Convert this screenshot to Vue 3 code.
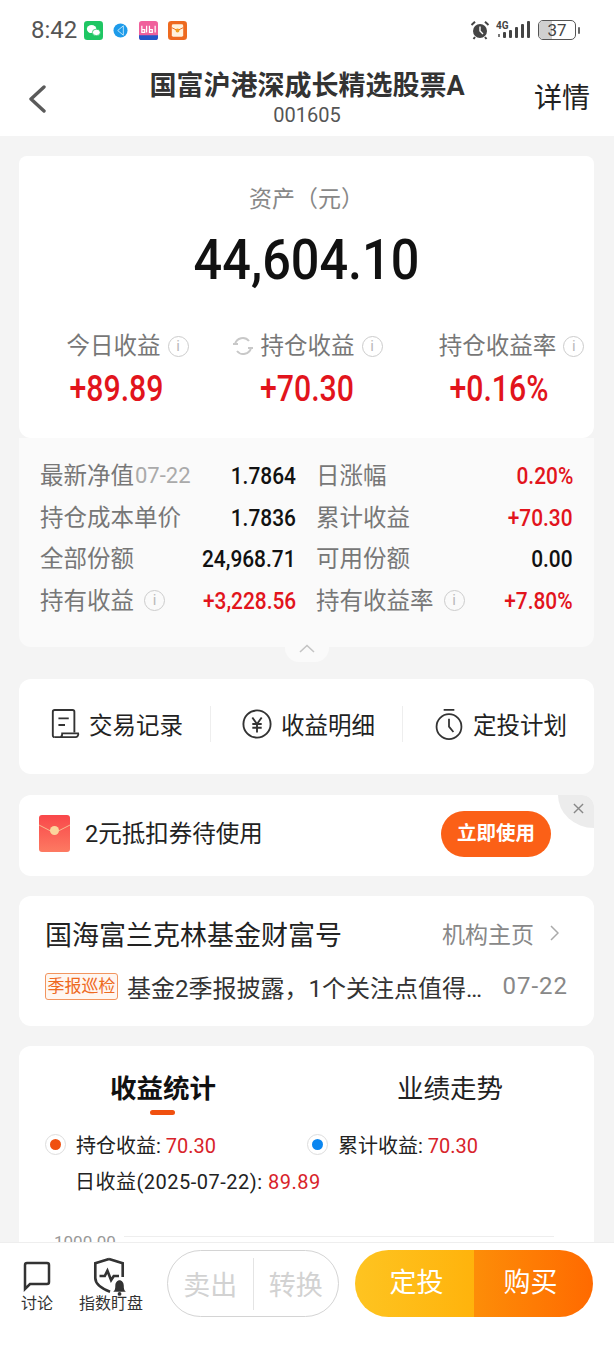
<template>
  <div class="page">
    <!-- 状态栏 -->
    <div class="status-bar">
      <span class="time">8:42</span>
      <svg class="app-icon" viewBox="0 0 20 20">
        <rect width="20" height="20" rx="3.5" fill="#1fc663" />
        <ellipse cx="8" cy="8.5" rx="5" ry="4.2" fill="#fff" />
        <ellipse cx="13" cy="12" rx="4.2" ry="3.4" fill="#fff" stroke="#1fc663" stroke-width=".8" />
      </svg>
      <svg class="app-icon small" viewBox="0 0 16 16">
        <circle cx="8" cy="8" r="7.5" fill="#1d9bea" />
        <path d="M11 3 5 8l6 5M11 3v10" stroke="#d5effc" stroke-width=".9" fill="none" />
      </svg>
      <svg class="app-icon pink" viewBox="0 0 20 20">
        <rect width="20" height="20" rx="3" fill="#f0609c" />
        <path d="M0 15h20v2a3 3 0 0 1-3 3H3a3 3 0 0 1-3-3z" fill="#2456c8" />
        <path d="M3 5v7h3V9H3M8 5v7M11 5v7h3V9h-3M17 5v7" stroke="#fff" stroke-width="1.3" fill="none" />
      </svg>
      <svg class="app-icon" viewBox="0 0 20 20">
        <rect width="20" height="20" rx="3.5" fill="#ee6a1f" />
        <rect x="4" y="3.5" width="12" height="13" rx="1.5" fill="#fff3dd" />
        <path d="M4 7l6 3 6-3" stroke="#ee6a1f" fill="none" />
        <circle cx="10" cy="10" r="2" fill="#f0a020" />
      </svg>
      <div class="status-right">
        <svg class="alarm" viewBox="0 0 20 20">
          <circle cx="10" cy="11" r="7" fill="#444" />
          <path d="M10 6.5V11l3 3" stroke="#fff" stroke-width="1.4" fill="none" />
          <path d="M1.5 5 5 1.8M18.5 5 15 1.8M5 17l-1.5 2M15 17l1.5 2" stroke="#444" stroke-width="2" />
        </svg>
        <svg class="signal" viewBox="0 0 36 20">
          <text x="0" y="9" class="net">4G</text>
          <rect x="2" y="14" width="2" height="3" fill="#777" />
          <rect x="7" y="12" width="3" height="6" rx="1" fill="#444" />
          <rect x="13" y="10" width="3" height="8" rx="1" fill="#444" />
          <rect x="19" y="7" width="3" height="11" rx="1" fill="#444" />
          <rect x="25" y="4" width="3" height="14" rx="1" fill="#444" />
          <rect x="31" y="1" width="3" height="17" rx="1" fill="#444" />
        </svg>
        <div class="battery"><span class="battery-fill"></span><span class="battery-num">37</span></div>
        <span class="battery-cap"></span>
      </div>
    </div>

    <!-- 标题栏 -->
    <header class="nav">
      <svg class="back" viewBox="0 0 18 28"><path d="M16 2 3 14l13 12" /></svg>
      <div class="nav-title">
        <div class="fund-name">国富沪港深成长精选股票A</div>
        <div class="fund-code">001605</div>
      </div>
      <span class="nav-detail">详情</span>
    </header>

    <main class="content">
      <section class="asset-card">
        <div class="asset-top">
          <div class="asset-label">资产（元）</div>
          <div class="asset-value">44,604.10</div>
          <div class="profit-row">
            <div v-for="item in profits" :key="item.label" class="profit-col">
              <div class="profit-label">
                <svg v-if="item.refresh" class="refresh" viewBox="0 0 22 22">
                  <path d="M3 9a8 8 0 0 1 14-3M19 13a8 8 0 0 1-14 3" />
                  <path d="M1 9h5M21 13h-5" />
                </svg>
                <span>{{ item.label }}</span>
                <span class="info">i</span>
              </div>
              <div class="profit-value">{{ item.value }}</div>
            </div>
          </div>
        </div>
        <div class="asset-detail">
          <div v-for="row in details" :key="row[0].label" class="detail-row">
            <div v-for="cell in row" :key="cell.label" class="detail-cell">
              <span class="detail-label">{{ cell.label }}</span>
              <span v-if="cell.date" class="detail-date">{{ cell.date }}</span>
              <span v-if="cell.info" class="info small-info">i</span>
              <span class="detail-value" :class="{ red: cell.red }">{{ cell.value }}</span>
            </div>
          </div>
          <div class="collapse">
            <svg viewBox="0 0 16 9"><path d="M1 8l7-6.5L15 8" /></svg>
          </div>
        </div>
      </section>

      <section class="card actions">
        <div class="action">
          <svg viewBox="0 0 32 34" class="action-icon">
            <path d="M5 31a2 2 0 0 1-2-2V4a2 2 0 0 1 2-2h19a2 2 0 0 1 2 2v22" />
            <path d="M9 11h11M9 18h7" />
            <path d="M5 31h22a3 3 0 0 0 3-4H13c0 2-1 4-3 4" />
          </svg>
          <span>交易记录</span>
        </div>
        <div class="action">
          <svg viewBox="0 0 32 34" class="action-icon">
            <circle cx="16" cy="17" r="14.5" />
            <path d="M11 10l5 7 5-7M11 17h10M11 21h10M16 17v9" stroke-width="1.6" />
          </svg>
          <span>收益明细</span>
        </div>
        <div class="action">
          <svg viewBox="0 0 32 36" class="action-icon">
            <circle cx="16" cy="21" r="14" />
            <path d="M10 2h12M16 12v9l5 6" />
          </svg>
          <span>定投计划</span>
        </div>
      </section>

      <section class="card coupon">
        <svg class="packet" viewBox="0 0 31 37">
          <defs>
            <linearGradient id="packetFill" x1="0" y1="0" x2="0" y2="1">
              <stop offset="0" stop-color="#f9474a" />
              <stop offset="1" stop-color="#fd7a62" />
            </linearGradient>
          </defs>
          <rect width="31" height="37" rx="3" fill="url(#packetFill)" />
          <path d="M0 10l15.500 8L31 10" stroke="#f7b98f" fill="none" />
          <circle cx="15.500" cy="15.500" r="4.500" fill="#fbd59c" />
        </svg>
        <span class="coupon-text">2元抵扣券待使用</span>
        <span class="coupon-btn">立即使用</span>
        <span class="coupon-close">
          <svg viewBox="0 0 12 12"><path d="M1 1l10 10M11 1 1 11" /></svg>
        </span>
      </section>

      <section class="card agency">
        <div class="agency-head">
          <span class="agency-name">国海富兰克林基金财富号</span>
          <span class="agency-link">机构主页</span>
          <svg class="agency-arrow" viewBox="0 0 9 16"><path d="M1 1l7 7-7 7" /></svg>
        </div>
        <div class="agency-news">
          <span class="news-tag">季报巡检</span>
          <span class="news-text">基金2季报披露，1个关注点值得…</span>
          <span class="news-date">07-22</span>
        </div>
      </section>

      <section class="card stats">
        <div class="tabs">
          <div class="tab active">收益统计</div>
          <div class="tab">业绩走势</div>
        </div>
        <div class="legend">
          <div class="legend-item">
            <span class="radio"><i class="dot orange"></i></span>
            <span>持仓收益: <b>70.30</b></span>
          </div>
          <div class="legend-item">
            <span class="radio"><i class="dot blue"></i></span>
            <span>累计收益: <b>70.30</b></span>
          </div>
        </div>
        <div class="legend-sub">日收益(2025-07-22): <b>89.89</b></div>
        <div class="chart-top">
          <span>1000.00</span>
          <i></i>
        </div>
      </section>
    </main>

    <!-- 底部操作栏 -->
    <footer class="bar">
      <div class="bar-link talk">
        <svg viewBox="0 0 30 32" class="bar-icon">
          <path d="M3 29V5a2 2 0 0 1 2-2h20a2 2 0 0 1 2 2v17a2 2 0 0 1-2 2H8z" />
        </svg>
        <span>讨论</span>
      </div>
      <div class="bar-link watch">
        <svg viewBox="0 0 36 37" class="bar-icon wide">
          <path d="M18 2l13 4v13M18 2 5 6v14c0 6 6 10 14 13" />
          <path d="M9 18h5l2.500-5 3.500 9 2.500-4h5" stroke-width="2" />
          <path class="bell" d="M22 33c1.500-1 2-3 2-6 0-3 2-5 4-5s4 2 4 5c0 3 .5 5 2 6z" />
          <circle cx="28" cy="35" r="1.800" fill="#333" />
        </svg>
        <span>指数盯盘</span>
      </div>
      <div class="sell-pill">
        <span>卖出</span>
        <i></i>
        <span>转换</span>
      </div>
      <div class="buy-pill">
        <span class="invest">定投</span>
        <span class="buy">购买</span>
      </div>
    </footer>
  </div>
</template>

<script setup>
const profits = [
  { label: '今日收益', value: '+89.89' },
  { label: '持仓收益', value: '+70.30', refresh: true },
  { label: '持仓收益率', value: '+0.16%' },
]

const details = [
  [
    { label: '最新净值', date: '07-22', value: '1.7864' },
    { label: '日涨幅', value: '0.20%', red: true },
  ],
  [
    { label: '持仓成本单价', value: '1.7836' },
    { label: '累计收益', value: '+70.30', red: true },
  ],
  [
    { label: '全部份额', value: '24,968.71' },
    { label: '可用份额', value: '0.00' },
  ],
  [
    { label: '持有收益', info: true, value: '+3,228.56', red: true },
    { label: '持有收益率', info: true, value: '+7.80%', red: true },
  ],
]
</script>

<style>
html,
body {
  margin: 0;
  background: #f4f4f4;
}
</style>

<style scoped>
.page {
  width: 614px;
  height: 1350px;
  display: flex;
  flex-direction: column;
  overflow: hidden;
  background: #f4f4f4;
  color: #222;
  font-family: Roboto, "Noto Sans CJK SC", sans-serif;
}
.status-bar {
  height: 60px;
  flex: none;
  display: flex;
  align-items: center;
  background: #fff;
  padding: 0 34px 0 31px;
  box-sizing: border-box;
}
.time {
  font-size: 24px;
  color: #555;
  width: 53px;
}
.app-icon {
  width: 19px;
  height: 19px;
  margin-right: 10px;
}
.app-icon.small {
  width: 15px;
  height: 15px;
  margin: 0 11px 0 0;
}
.status-right {
  margin-left: auto;
  display: flex;
  align-items: center;
}
.alarm {
  width: 20px;
  height: 20px;
  margin-right: 6px;
}
.signal {
  width: 36px;
  height: 20px;
  margin-right: 6px;
}
.net {
  font-size: 10px;
  font-weight: 700;
  fill: #444;
}
.battery {
  position: relative;
  width: 38px;
  height: 20px;
  border: 1.5px solid #555;
  border-radius: 5px;
  box-sizing: border-box;
  overflow: hidden;
  display: flex;
  align-items: center;
  justify-content: center;
}
.battery-fill {
  position: absolute;
  left: 0;
  top: 0;
  bottom: 0;
  width: 37%;
  background: #d0d0d0;
}
.battery-num {
  position: relative;
  font-size: 17px;
  color: #444;
}
.battery-cap {
  width: 2px;
  height: 7px;
  margin-left: 2px;
  background: #666;
  border-radius: 1px;
}

.nav {
  height: 76px;
  flex: none;
  display: flex;
  align-items: flex-start;
  background: #fff;
}
.back {
  width: 18px;
  height: 28px;
  margin: 25px 0 0 28px;
  flex: none;
}
.back path {
  fill: none;
  stroke: #5a5a5a;
  stroke-width: 3.4;
  stroke-linecap: round;
  stroke-linejoin: round;
}
.nav-title {
  flex: 1;
  text-align: center;
  margin-top: 8px;
  padding-left: 34px;
  white-space: nowrap;
}
.fund-name {
  font-size: 27px;
  line-height: 36px;
  font-weight: 700;
  color: #333;
}
.fund-code {
  font-size: 20px;
  line-height: 23px;
  color: #555;
}
.nav-detail {
  flex: none;
  font-size: 28px;
  line-height: 40px;
  margin: 19px 24px 0 0;
  color: #222;
}

.content {
  flex: 1;
  min-height: 0;
  overflow: hidden;
  padding: 20px 20px 0 19px;
  display: flex;
  flex-direction: column;
  gap: 20px;
}
.asset-card {
  flex: none;
  height: 491px;
}
.asset-top {
  height: 282px;
  background: #fff;
  border-radius: 8px 8px 12px 12px;
  text-align: center;
  padding-top: 29px;
  box-sizing: border-box;
}
.asset-label {
  font-size: 23px;
  line-height: 30px;
  color: #888;
}
.asset-value {
  font-size: 56px;
  line-height: 62px;
  margin-top: 14px;
  font-weight: 500;
  color: #111;
  transform: scaleX(.9);
}
.profit-row {
  display: grid;
  grid-template-columns: repeat(3, 192px);
  margin-top: 39px;
}
.profit-label {
  display: flex;
  align-items: center;
  justify-content: center;
  gap: 7px;
  font-size: 23.500px;
  line-height: 32px;
  color: #777;
  white-space: nowrap;
}
.profit-col:first-child .profit-label {
  padding-left: 25px;
}
.profit-col:last-child .profit-label {
  padding-left: 25px;
}
.refresh {
  width: 22px;
  height: 22px;
}
.refresh path {
  fill: none;
  stroke: #c8c8c8;
  stroke-width: 2;
}
.info {
  flex: none;
  width: 21px;
  height: 21px;
  box-sizing: border-box;
  border: 1.500px solid #ccc;
  border-radius: 50%;
  color: #bbb;
  font-size: 15px;
  line-height: 18px;
  text-align: center;
}
.profit-value {
  font-size: 36px;
  line-height: 44px;
  margin-top: 5px;
  font-weight: 500;
  color: #e2141c;
  transform: scaleX(.84);
}
.profit-col:first-child .profit-value {
  margin-left: 3px;
}
.asset-detail {
  position: relative;
  height: 209px;
  background: #fafafa;
  border-radius: 0 0 12px 12px;
  padding: 17px 21px 0;
  box-sizing: border-box;
}
.detail-row {
  display: grid;
  grid-template-columns: 256px 1fr;
  column-gap: 20px;
  height: 41.700px;
  align-items: center;
}
.detail-cell {
  display: flex;
  align-items: center;
  font-size: 23.500px;
  line-height: 32px;
  white-space: nowrap;
}
.detail-label {
  color: #777;
}
.detail-date {
  color: #aaa;
  font-size: 22px;
  margin-left: 1px;
}
.small-info {
  margin-left: 10px;
}
.detail-value {
  margin-left: auto;
  font-size: 24px;
  font-weight: 500;
  color: #111;
  transform: scaleX(.87);
  transform-origin: right center;
}
.detail-value.red {
  color: #e2141c;
}
.collapse {
  position: absolute;
  left: 50%;
  bottom: -15px;
  width: 44px;
  height: 18px;
  margin-left: -22px;
  background: #fafafa;
  border-radius: 0 0 14px 14px;
  display: flex;
  justify-content: center;
  align-items: flex-start;
}
.collapse svg {
  width: 16px;
  height: 9px;
}
.collapse path {
  fill: none;
  stroke: #c4c4c4;
  stroke-width: 1.600;
}

.card {
  flex: none;
  background: #fff;
  border-radius: 12px;
}
.actions {
  height: 95px;
  margin-top: 12px;
  display: flex;
  align-items: center;
  padding-bottom: 6px;
  box-sizing: border-box;
}
.action {
  flex: 1;
  height: 36px;
  display: flex;
  align-items: center;
  justify-content: center;
  gap: 9px;
  padding-left: 4px;
  font-size: 23.500px;
  color: #222;
  border-left: 1px solid #eee;
}
.action:first-child {
  border-left: none;
}
.action-icon {
  width: 30px;
  height: 32px;
  flex: none;
}
.action-icon path,
.action-icon circle {
  fill: none;
  stroke: #333;
  stroke-width: 2;
}
.coupon {
  height: 81px;
  margin-top: 1px;
  position: relative;
  display: flex;
  align-items: center;
  padding: 0 43px 4px 20px;
  box-sizing: border-box;
  overflow: hidden;
}
.packet {
  width: 31px;
  height: 37px;
  flex: none;
}
.coupon-text {
  font-size: 23.500px;
  margin: 0 0 4px 15px;
  color: #222;
}
.coupon-btn {
  margin-left: auto;
  width: 110px;
  height: 46px;
  border-radius: 23px;
  background: #fb6017;
  color: #fff;
  font-size: 19.500px;
  font-weight: 700;
  line-height: 46px;
  text-align: center;
}
.coupon-close {
  position: absolute;
  right: 0;
  top: 0;
  width: 36px;
  height: 33px;
  background: #ececec;
  border-bottom-left-radius: 36px 33px;
}
.coupon-close svg {
  position: absolute;
  right: 10px;
  top: 8px;
  width: 11px;
  height: 11px;
}
.coupon-close path {
  stroke: #888;
  stroke-width: 1.500;
  fill: none;
}
.agency {
  height: 130px;
  padding: 20px 26px 0;
  box-sizing: border-box;
}
.agency-head {
  display: flex;
  align-items: center;
  height: 34px;
}
.agency-name {
  font-size: 27px;
  color: #222;
}
.agency-link {
  margin-left: auto;
  font-size: 23px;
  color: #888;
}
.agency-arrow {
  width: 9px;
  height: 16px;
  margin: 0 9px 0 16px;
}
.agency-arrow path {
  fill: none;
  stroke: #aaa;
  stroke-width: 1.500;
}
.agency-news {
  display: flex;
  align-items: center;
  margin-top: 19px;
  height: 34px;
}
.news-tag {
  flex: none;
  width: 73px;
  height: 27px;
  box-sizing: border-box;
  border: 1px solid #f2955f;
  border-radius: 3px;
  background: #fff6f0;
  color: #ee6a1f;
  font-size: 17px;
  line-height: 25px;
  text-align: center;
}
.news-text {
  flex: 1;
  min-width: 0;
  margin: 0 20px 0 9px;
  font-size: 24px;
  color: #333;
  white-space: nowrap;
}
.news-date {
  flex: none;
  font-size: 24px;
  letter-spacing: 1px;
  color: #888;
}
.stats {
  height: 260px;
  padding: 0 26px;
  border-radius: 12px 12px 0 0;
}
.tabs {
  display: flex;
  height: 74px;
}
.tab {
  font-size: 26.500px;
  line-height: 86px;
  color: #222;
}
.tab.active {
  position: relative;
  margin-left: 65px;
  font-weight: 700;
  color: #111;
}
.tab:last-child {
  margin-left: 181px;
}
.tab.active::after {
  content: "";
  position: absolute;
  left: 40px;
  bottom: 5px;
  width: 25px;
  height: 5px;
  border-radius: 3px;
  background: #f0500f;
}
.legend {
  display: grid;
  grid-template-columns: 262px 1fr;
  margin-top: 6px;
  height: 36px;
  align-items: center;
}
.legend-item {
  display: flex;
  align-items: center;
  gap: 10px;
}
.legend-item,
.legend-sub {
  font-size: 20px;
  color: #222;
  white-space: nowrap;
}
.legend-item b,
.legend-sub b {
  font-weight: 400;
  color: #d8232a;
}
.radio {
  width: 21px;
  height: 21px;
  box-sizing: border-box;
  border: 1px solid #ddd;
  border-radius: 50%;
  display: flex;
  align-items: center;
  justify-content: center;
}
.dot {
  width: 11px;
  height: 11px;
  border-radius: 50%;
}
.dot.orange {
  background: #f0500f;
}
.dot.blue {
  background: #0a86f0;
}
.legend-sub {
  margin-top: 2px;
  padding-left: 30px;
  line-height: 36px;
  letter-spacing: .5px;
}
.chart-top {
  display: flex;
  height: 20px;
  margin-top: 32px;
  padding-left: 9px;
  font-size: 17px;
  line-height: 20px;
  color: #999;
}
.chart-top i {
  width: 430px;
  height: 1px;
  margin: 4px 0 0 8px;
  background: #eee;
}

.bar {
  height: 108px;
  flex: none;
  display: flex;
  align-items: flex-start;
  background: #fff;
  border-top: 1px solid #eee;
  box-sizing: border-box;
  padding: 7px 21px 0 0;
}
.bar-link {
  flex: none;
  display: flex;
  flex-direction: column;
  align-items: center;
  font-size: 16px;
  line-height: 20px;
  color: #333;
  margin-top: 10px;
  white-space: nowrap;
}
.bar-link span {
  margin-top: 2px;
}
.bar-link.talk {
  width: 30px;
  margin-left: 22px;
}
.bar-link.watch {
  margin-left: 27px;
  margin-right: 24px;
}
.bar-icon {
  width: 30px;
  height: 32px;
}
.bar-icon.wide {
  width: 38px;
  height: 39px;
  margin: -3px 0 -4px -5px;
}
.bar-icon path,
.bar-icon circle {
  fill: none;
  stroke: #333;
  stroke-width: 2.500;
}
.bar-icon .bell {
  fill: #333;
  stroke: none;
}
.bar-icon circle {
  fill: #333;
  stroke: none;
}
.sell-pill {
  flex: none;
  width: 172px;
  height: 67px;
  box-sizing: border-box;
  border: 1px solid #d4d4d4;
  border-radius: 34px;
  display: flex;
  align-items: center;
  font-size: 27px;
  color: #d2d2d2;
}
.sell-pill span {
  flex: 1;
  text-align: center;
}
.sell-pill i {
  flex: none;
  width: 1px;
  height: 52px;
  background: #e4e4e4;
}
.buy-pill {
  flex: none;
  width: 238px;
  height: 67px;
  margin-left: auto;
  border-radius: 34px;
  overflow: hidden;
  display: flex;
  color: #fff;
  font-size: 27px;
  line-height: 67px;
  text-align: center;
}
.invest,
.buy {
  width: 119px;
  box-sizing: border-box;
}
.invest {
  padding-left: 4px;
  background: linear-gradient(90deg, #fec421, #ffb30c);
}
.buy {
  padding-right: 6px;
  background: linear-gradient(90deg, #fd8d08, #ff6a00);
}
</style>
